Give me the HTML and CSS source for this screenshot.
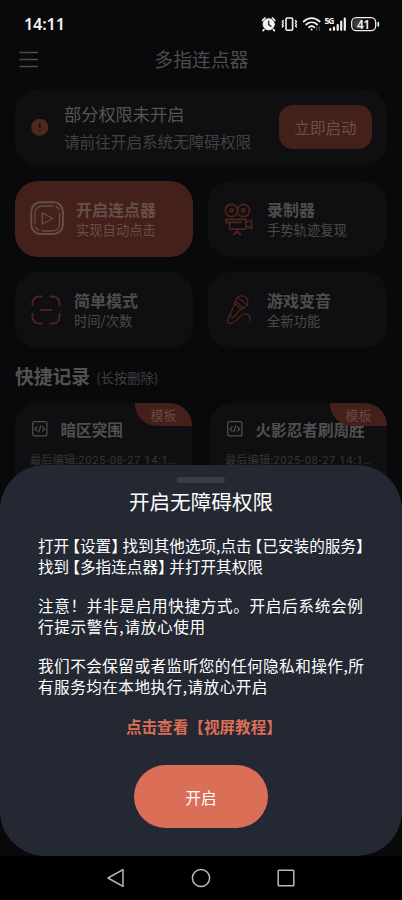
FILE: index.html
```
<!DOCTYPE html>
<html lang="zh-CN">
<head>
<meta charset="utf-8">
<title>多指连点器</title>
<link rel="stylesheet" href="styles.css">
</head>
<body>
<div class="phone">
  <header class="status">
    <span class="clock">14:11</span>
    <svg class="status-icons" width="120" height="18" viewBox="0 0 120 18">
      <g fill="none" stroke="#f2f2f2" stroke-linecap="round">
        <circle cx="8.700" cy="9.300" r="5.600" fill="#f2f2f2"/>
        <path d="M2.600 5.400 5 3M14.800 5.400 12.400 3M4 14.600l-.9 1M13.400 14.600l.9 1" stroke-width="1.700"/>
        <path d="M8.700 6v3.600l2.200 1.700" stroke="#111113" stroke-width="1.200"/>
        <rect x="26" y="3" width="6.600" height="12.200" rx="1.300" stroke-width="1.600"/>
        <path d="M23.300 5.500l-1 1.300 1 1.300-1 1.300 1 1.300-1 1.300M35.500 5.500l1 1.300-1 1.300 1 1.300-1 1.300 1 1.300" stroke-width="1.300"/>
        <path d="M43.600 6.500c4.800-4.400 11.300-4.400 16.100 0M46.200 9.500c3.300-3 7.700-3 11 0M48.900 12.300c1.700-1.500 3.800-1.500 5.500 0" stroke-width="1.700"/>
        <circle cx="51.600" cy="14.500" r="1" fill="#f2f2f2" stroke="none"/>
        <path d="M56.600 12v3M59.400 12v3" stroke="#444" stroke-width="1.500"/>
        <path d="M70.300 14.200v.6M74 12.500v2.300M77.700 10v4.800M81.200 6.700v8.100M84.800 3.500v11.300" stroke-width="2.200"/>
        <rect x="91.700" y="2.600" width="24" height="13" rx="4.600" stroke-width="1.300"/>
        <path d="M118.300 7.700v3" stroke-width="1.700"/>
      </g>
      <path d="M97 4h5v10h-5a3.700 3.700 0 0 1-3.700-3.700V7.700A3.700 3.700 0 0 1 97 4z" fill="#3c3c3e"/>
      <text class="net" x="64.500" y="8.600">5G</text>
      <text class="battery" x="97" y="13.500">41</text>
    </svg>
  </header>
  <div class="appbar">
    <svg width="20" height="18" viewBox="0 0 20 18"><path d="M.5 1.500h18.500M.5 8.500h18.500M.5 15.500h18.500" stroke="#4d4d4f" stroke-width="1.300"/></svg>
    <h1>多指连点器</h1>
  </div>

  <main class="content">
    <section class="notice">
      <svg width="18" height="18" viewBox="0 0 18 18"><circle cx="8.700" cy="9.300" r="8.500" fill="#51271d"/><path d="M8.700 5.300V10M8.700 12v1.500" stroke="#100d0e" stroke-width="1.500"/></svg>
      <div class="notice-text">
        <h2>部分权限未开启</h2>
        <p>请前往开启系统无障碍权限</p>
      </div>
      <button class="start">立即启动</button>
    </section>

    <section class="tiles">
      <article class="tile active">
        <svg width="36" height="36" viewBox="0 0 36 36" fill="none" stroke="#654f49">
          <rect x="1.300" y="1.300" width="31.600" height="31.600" rx="9" stroke-width="2"/>
          <path d="M5 23.500V12a7 7 0 0 1 7-7h11.500M29.500 12v11.500a6.500 6.500 0 0 1-6.500 6.500H12" stroke-width="1.300"/>
          <path d="M25.500 5.200a7 7 0 0 1 4 4M9.200 29.600a7 7 0 0 1-4-4" stroke-width="1.300"/>
          <path d="M12.300 12v11l10.600-5.500z" stroke-width="1.400" stroke-linejoin="round"/>
        </svg>
        <div><h3>开启连点器</h3><p>实现自动点击</p></div>
      </article>
      <article class="tile film">
        <svg width="30" height="34" viewBox="0 0 30 34" fill="none" stroke="#4d241b" stroke-width="1.700">
          <circle cx="8.500" cy="8.500" r="6.100"/><circle cx="20.500" cy="8.500" r="6.100"/>
          <circle cx="8.500" cy="8.500" r="1.600"/><circle cx="20.500" cy="8.500" r="1.600"/>
          <path d="M3 17.300h20v9.900H6.700v-6.500H3zM6.700 20.400h12M23 20.500l5.500-2.200v8l-5.500-2M10.300 33l3.800-3.500 3.800 3.500"/>
        </svg>
        <div><h3>录制器</h3><p>手势轨迹复现</p></div>
      </article>
      <article class="tile simple">
        <svg width="30" height="30" viewBox="0 0 30 30" fill="none" stroke="#4d241b" stroke-width="2">
          <path d="M1.500 11V8a6.500 6.500 0 0 1 6.500-6.500h3.500M18.500 1.500H22A6.500 6.500 0 0 1 28.500 8v3M28.500 18v4a6.500 6.500 0 0 1-6.500 6.500h-3.500M11.500 28.500H8A6.500 6.500 0 0 1 1.500 22v-4M9 15h12"/>
        </svg>
        <div><h3>简单模式</h3><p>时间/次数</p></div>
      </article>
      <article class="tile mic">
        <svg width="26" height="30" viewBox="0 0 26 30" fill="none" stroke="#4d241b" stroke-width="1.300" stroke-linecap="round" stroke-linejoin="round">
          <path d="M9.300 6.200a6.300 6.300 0 1 1 8.300 6.900zM9.300 6.200 8.200 8.600l7.500 5.700 1.900-1.200M12 3l8.500 6.500M8.600 9.100 3.700 20.300l3.500 2.500 7.500-8.800M3.700 20.300l-1.800 4C.7 27 2.500 29 5 28.500c6-1.200 9.500-10.500 15.500-9.500 3 .5 4 3 3.700 7"/>
        </svg>
        <div><h3>游戏变音</h3><p>全新功能</p></div>
      </article>
    </section>

    <div class="section-title"><h2>快捷记录</h2><span>(长按删除)</span></div>

    <section class="records">
      <article class="record">
        <div class="record-head">
          <svg width="16" height="16" viewBox="0 0 16 16" fill="none" stroke="#515152" stroke-width="1.200"><rect x=".7" y=".7" width="14.200" height="14.200" rx="2"/><path d="M5.500 5.300 3 7.900l2.500 2.500M10.200 5.300l2.500 2.600-2.500 2.500M8.800 4.500l-2 6.800"/></svg>
          <h3>暗区突围</h3>
        </div>
        <p>最后编辑:<span>2025-08-27 14:1…</span></p>
        <b class="tag">模板</b>
      </article>
      <article class="record">
        <div class="record-head">
          <svg width="16" height="16" viewBox="0 0 16 16" fill="none" stroke="#515152" stroke-width="1.200"><rect x=".7" y=".7" width="14.200" height="14.200" rx="2"/><path d="M5.500 5.300 3 7.900l2.500 2.500M10.200 5.300l2.500 2.600-2.500 2.500M8.800 4.500l-2 6.800"/></svg>
          <h3>火影忍者刷周胜</h3>
        </div>
        <p>最后编辑:<span>2025-08-27 14:1…</span></p>
        <b class="tag">模板</b>
      </article>
    </section>
  </main>

  <div class="sheet">
    <i class="handle"></i>
    <h2>开启无障碍权限</h2>
    <div class="guide">
      <p>打开<span class="open">【</span>设置<span class="close">】</span>找到其他选项,点击<span class="open">【</span>已安装的服务<span class="close">】</span><br>找到<span class="open">【</span>多指连点器<span class="close">】</span>并打开其权限</p>
      <p class="wide">注意！并非是启用快捷方式。开启后系统会例<br>行提示警告,请放心使用</p>
      <p class="mid">我们不会保留或者监听您的任何隐私和操作,所<br>有服务均在本地执行,请放心开启</p>
    </div>
    <a class="tutorial">点击查看【视屏教程<span class="half">】</span></a>
    <button class="enable">开启</button>
  </div>

  <nav class="navbar">
    <svg width="20" height="20" viewBox="0 0 20 20"><path d="M17 1.600v16.800L2 10z"/></svg>
    <svg width="20" height="20" viewBox="0 0 20 20"><circle cx="10" cy="10" r="8.600"/></svg>
    <svg width="20" height="20" viewBox="0 0 20 20"><rect x="2.200" y="2.200" width="15.600" height="15.600" rx=".8"/></svg>
  </nav>
</div>
</body>
</html>
```
FILE: styles.css
```
* { box-sizing: border-box; margin: 0; padding: 0; }
body { background: #09090b; font-family: "Noto Sans CJK SC", sans-serif; }
h1, h2, h3, b { font-weight: 400; }
button { border: 0; font: inherit; }
svg { display: block; flex: none; }
p, h1, h2, h3 { white-space: nowrap; }

.phone { position: relative; width: 402px; height: 900px; overflow: hidden; background: #09090b; }

.status { display: flex; justify-content: space-between; align-items: center; height: 46px; padding: 1px 22px 0 24px; }
.clock { font: 600 16.300px/20px "Noto Sans", sans-serif; color: #f4f4f4; letter-spacing: -.2px; }
.net { font: 700 8.500px "Noto Sans", sans-serif; fill: #f2f2f2; letter-spacing: -1px; }
.battery { font: 600 12px "Noto Sans", sans-serif; fill: #f2f2f2; letter-spacing: -.5px; }

.appbar { display: grid; grid-template-columns: 20px 1fr 20px; align-items: center; height: 27px; padding: 0 18px 0 19px; }
.appbar h1 { padding-bottom: 2px; text-align: center; font-size: 18.800px; line-height: 25px; color: #4d4d4f; }

.content { padding: 16px 15px 0; }
.notice { display: flex; align-items: center; height: 76px; padding: 0 15px 0 16px; border-radius: 23px; background: #0f0f11; }
.notice-text { flex: 1; margin-left: 15px; }
.notice-text h2 { font-size: 17.200px; line-height: 28px; color: #545455; }
.notice-text p { font-size: 15.600px; line-height: 27px; color: #414143; }
.start { width: 93px; height: 44px; border-radius: 14px; background: #43201a; color: #665049; font-size: 15.500px; }

.tiles { display: grid; grid-template-columns: 178px 179px; gap: 15px; grid-auto-rows: 76px; justify-content: space-between; margin-top: 16px; }
.tile { display: flex; align-items: center; padding-left: 15px; border-radius: 23px; background: #0f0f11; }
.tile div { margin-left: 10px; }
.tile h3 { font-size: 16px; font-weight: 700; line-height: 21px; color: #4d4d4e; }
.tile p { font-size: 13.300px; line-height: 20px; color: #4a4a4b; }
.tile.active { background: #43201a; }
.tile.active h3, .tile.active p { color: #654f49; }
.tile.film { padding-left: 15px; }
.tile.film div { margin-left: 14px; }
.tile.simple { padding-left: 16px; }
.tile.simple div { margin-left: 13px; }
.tile.mic { padding-left: 18px; }
.tile.mic div { margin-left: 15px; }

.section-title { display: flex; align-items: center; height: 28px; margin-top: 14px; }
.section-title h2 { font-size: 18.800px; font-weight: 700; line-height: 28px; color: #525253; }
.section-title span { margin: 3px 0 0 6px; font-size: 13.300px; line-height: 20px; color: #3f3f41; }

.records { display: grid; grid-template-columns: 177px 177px; justify-content: space-between; margin-top: 13px; }
.record { position: relative; height: 90px; padding: 14px 15px 0; border-radius: 22px; background: #0f0f11; overflow: hidden; }
.record-head { display: flex; align-items: center; height: 24px; padding-left: 1.500px; gap: 13px; }
.record h3 { font-size: 15.600px; font-weight: 700; line-height: 24px; color: #505051; }
.record p { margin-top: 10px; font-size: 11.300px; line-height: 16px; color: #353537; }
.record p span { font-family: Roboto, sans-serif; letter-spacing: .56px; }
.tag { position: absolute; top: 0; right: 0; width: 57px; height: 23px; border-radius: 0 22px 0 22px; background: #43201a; color: #664a43; font-size: 13px; line-height: 23px; text-align: center; }

.sheet { position: absolute; left: 0; right: 0; top: 465px; height: 391px; display: flex; flex-direction: column; align-items: center; border-radius: 45px; background: #242832; color: #fff; }
.handle { width: 48px; height: 6px; margin-top: 12px; border-radius: 3px; background: #3a3d47; flex: none; }
.sheet h2 { margin-top: 3px; font-size: 20.600px; line-height: 30px; }
.guide { align-self: stretch; display: grid; gap: 19px; margin-top: 19px; padding-left: 38px; font-size: 15.600px; line-height: 20.500px; }
.wide { letter-spacing: .68px; }
.mid { letter-spacing: .48px; }
.open, .close, .half { font-feature-settings: "halt"; }
.open { margin-left: 3px; }
.close { margin-right: 3.500px; }
.tutorial { margin: 18px 2px 0 0; font-size: 15.600px; font-weight: 700; line-height: 24px; color: #db6e56; }
.enable { width: 134px; height: 63px; margin-top: 27px; border-radius: 31.500px; background: #db6e56; color: #fff; font-size: 15.500px; flex: none; }

.navbar { position: absolute; left: 0; right: 0; bottom: 0; height: 44px; display: flex; justify-content: center; align-items: center; gap: 65px; background: #000; }
.navbar svg { fill: none; stroke: #b9b9b9; stroke-width: 1.500; stroke-linejoin: round; }
```
